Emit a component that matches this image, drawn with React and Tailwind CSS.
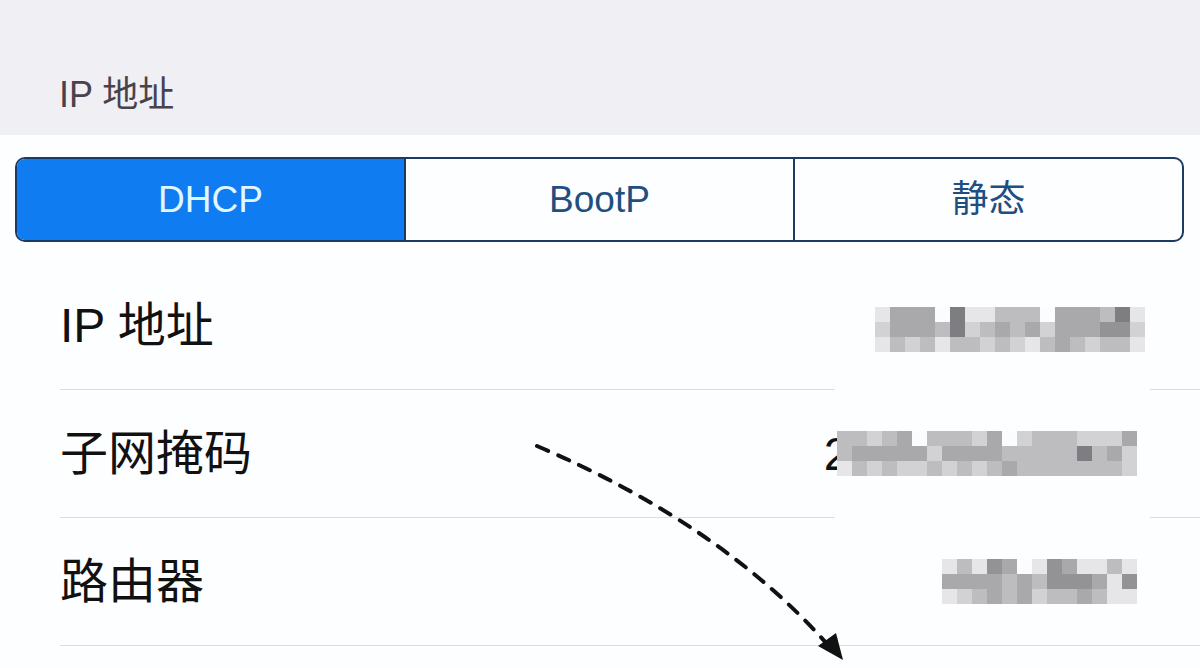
import React from 'react';

const cjk = { fontFamily: '"Liberation Sans", "Noto Sans CJK SC", sans-serif' };

const shades = {
  w: '#fbfcfd',
  a: '#e6e6e8',
  b: '#d2d2d5',
  c: '#bdbdc0',
  d: '#a9a9ac',
  e: '#939396',
  f: '#7d7d82',
};

// pixelated (redacted) values, one string per row of cells
const blocks = {
  ip: ['adddwfaacccwdddcfa', 'bdddcfbcdcdbdddeeb', 'acbcaccbcbacdcbcca'],
  mask: ['ccbcdwcccbdwbcccbbbd', 'cdddddbddddcccccfcdb', 'acbcbbcbcbcdcccccccb'],
  router: ['acaedwaedaaca', 'ddddcdceeedae', 'abcdcdbccdcaa'],
};

const Pixels = ({ rows }) => (
  <div className="flex flex-col">
    {rows.map((row, i) => (
      <div key={i} className="flex">
        {row.split('').map((k, j) => (
          <div key={j} className="w-[15px] h-[15px]" style={{ background: shades[k] }} />
        ))}
      </div>
    ))}
  </div>
);

const Row = ({ label, children }) => (
  <div className="ml-[60px] h-[128px] border-b border-[#dcdde2] flex items-center justify-between">
    <span className="text-[48px] text-[#111] leading-none" style={cjk}>{label}</span>
    {children}
  </div>
);

export default function App() {
  return (
    <div className="relative w-[1200px] h-[668px] overflow-hidden bg-[#fdfeff]" style={cjk}>
      <div className="h-[135px] bg-[#efeff4] pl-[59px] pt-[74px]">
        <span className="text-[36px] leading-[42px] text-[#48424d]">IP 地址</span>
      </div>

      <div className="mt-[22px] ml-[15px] mr-[16px] h-[85px] flex rounded-[10px] border-2 border-[#1d3a60] overflow-hidden">
        <div className="flex-1 bg-[#0f7cf2] flex items-center justify-center text-[37px] text-[#e2f6ff]">DHCP</div>
        <div className="flex-1 border-l-2 border-[#1d3a60] flex items-center justify-center text-[37px] text-[#1f4f80]">BootP</div>
        <div className="flex-1 border-l-2 border-[#1d3a60] flex items-center justify-center text-[37px] text-[#1f4f80]">静态</div>
      </div>

      <div className="relative mt-[20px]">
        <div className="absolute left-[835px] top-[118px] w-[315px] h-[145px] bg-[#fdfeff]" />
        <Row label="IP 地址">
          <div className="relative z-10 mr-[55px] mt-[8px]">
            <Pixels rows={blocks.ip} />
          </div>
        </Row>
        <Row label="子网掩码">
          <div className="relative z-10 mr-[63px] flex items-center">
            <span className="text-[47px] leading-none text-[#111]">2</span>
            <div className="relative -ml-[13px]">
              <Pixels rows={blocks.mask} />
            </div>
          </div>
        </Row>
        <Row label="路由器">
          <div className="relative z-10 mr-[63px]">
            <Pixels rows={blocks.router} />
          </div>
        </Row>
      </div>

      <svg className="absolute inset-0 pointer-events-none" width="1200" height="668">
        <path d="M537 446 Q 722 525 828 645" fill="none" stroke="#111" strokeWidth="4" strokeDasharray="12 11" strokeLinecap="round" />
        <polygon points="843,660 818,646 836,633" fill="#111" />
      </svg>
    </div>
  );
}
